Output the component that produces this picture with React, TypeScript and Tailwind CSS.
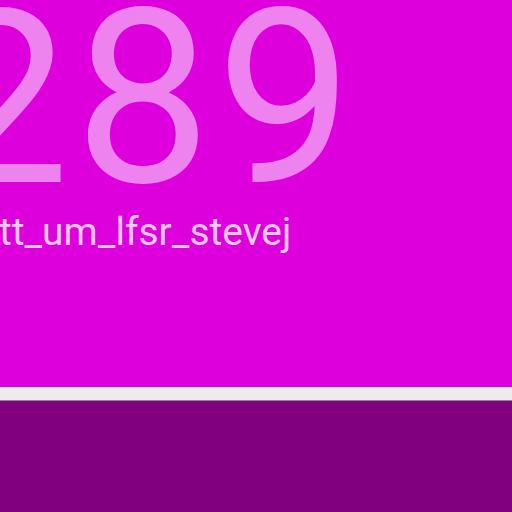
export default function App() {
  return (
    <div className="w-[512px] h-[512px] overflow-hidden flex flex-col bg-[#800080]" style={{ fontFamily: "Roboto, sans-serif" }}>
      <div className="h-[387px] bg-[#dd00dd] flex flex-col overflow-hidden">
        <div className="ml-[-67px] mt-[-22px] text-[243px] leading-none tracking-[5px] text-[#ee82ee] whitespace-nowrap">289</div>
        <div className="ml-[-1px] mt-[-8px] text-[39px] leading-none text-[#fbc8fb] whitespace-nowrap">tt_um_lfsr_stevej</div>
      </div>
      <div className="h-[14px] bg-[#ececec] border-b border-[#8a8a8a]" />
    </div>
  );
}
